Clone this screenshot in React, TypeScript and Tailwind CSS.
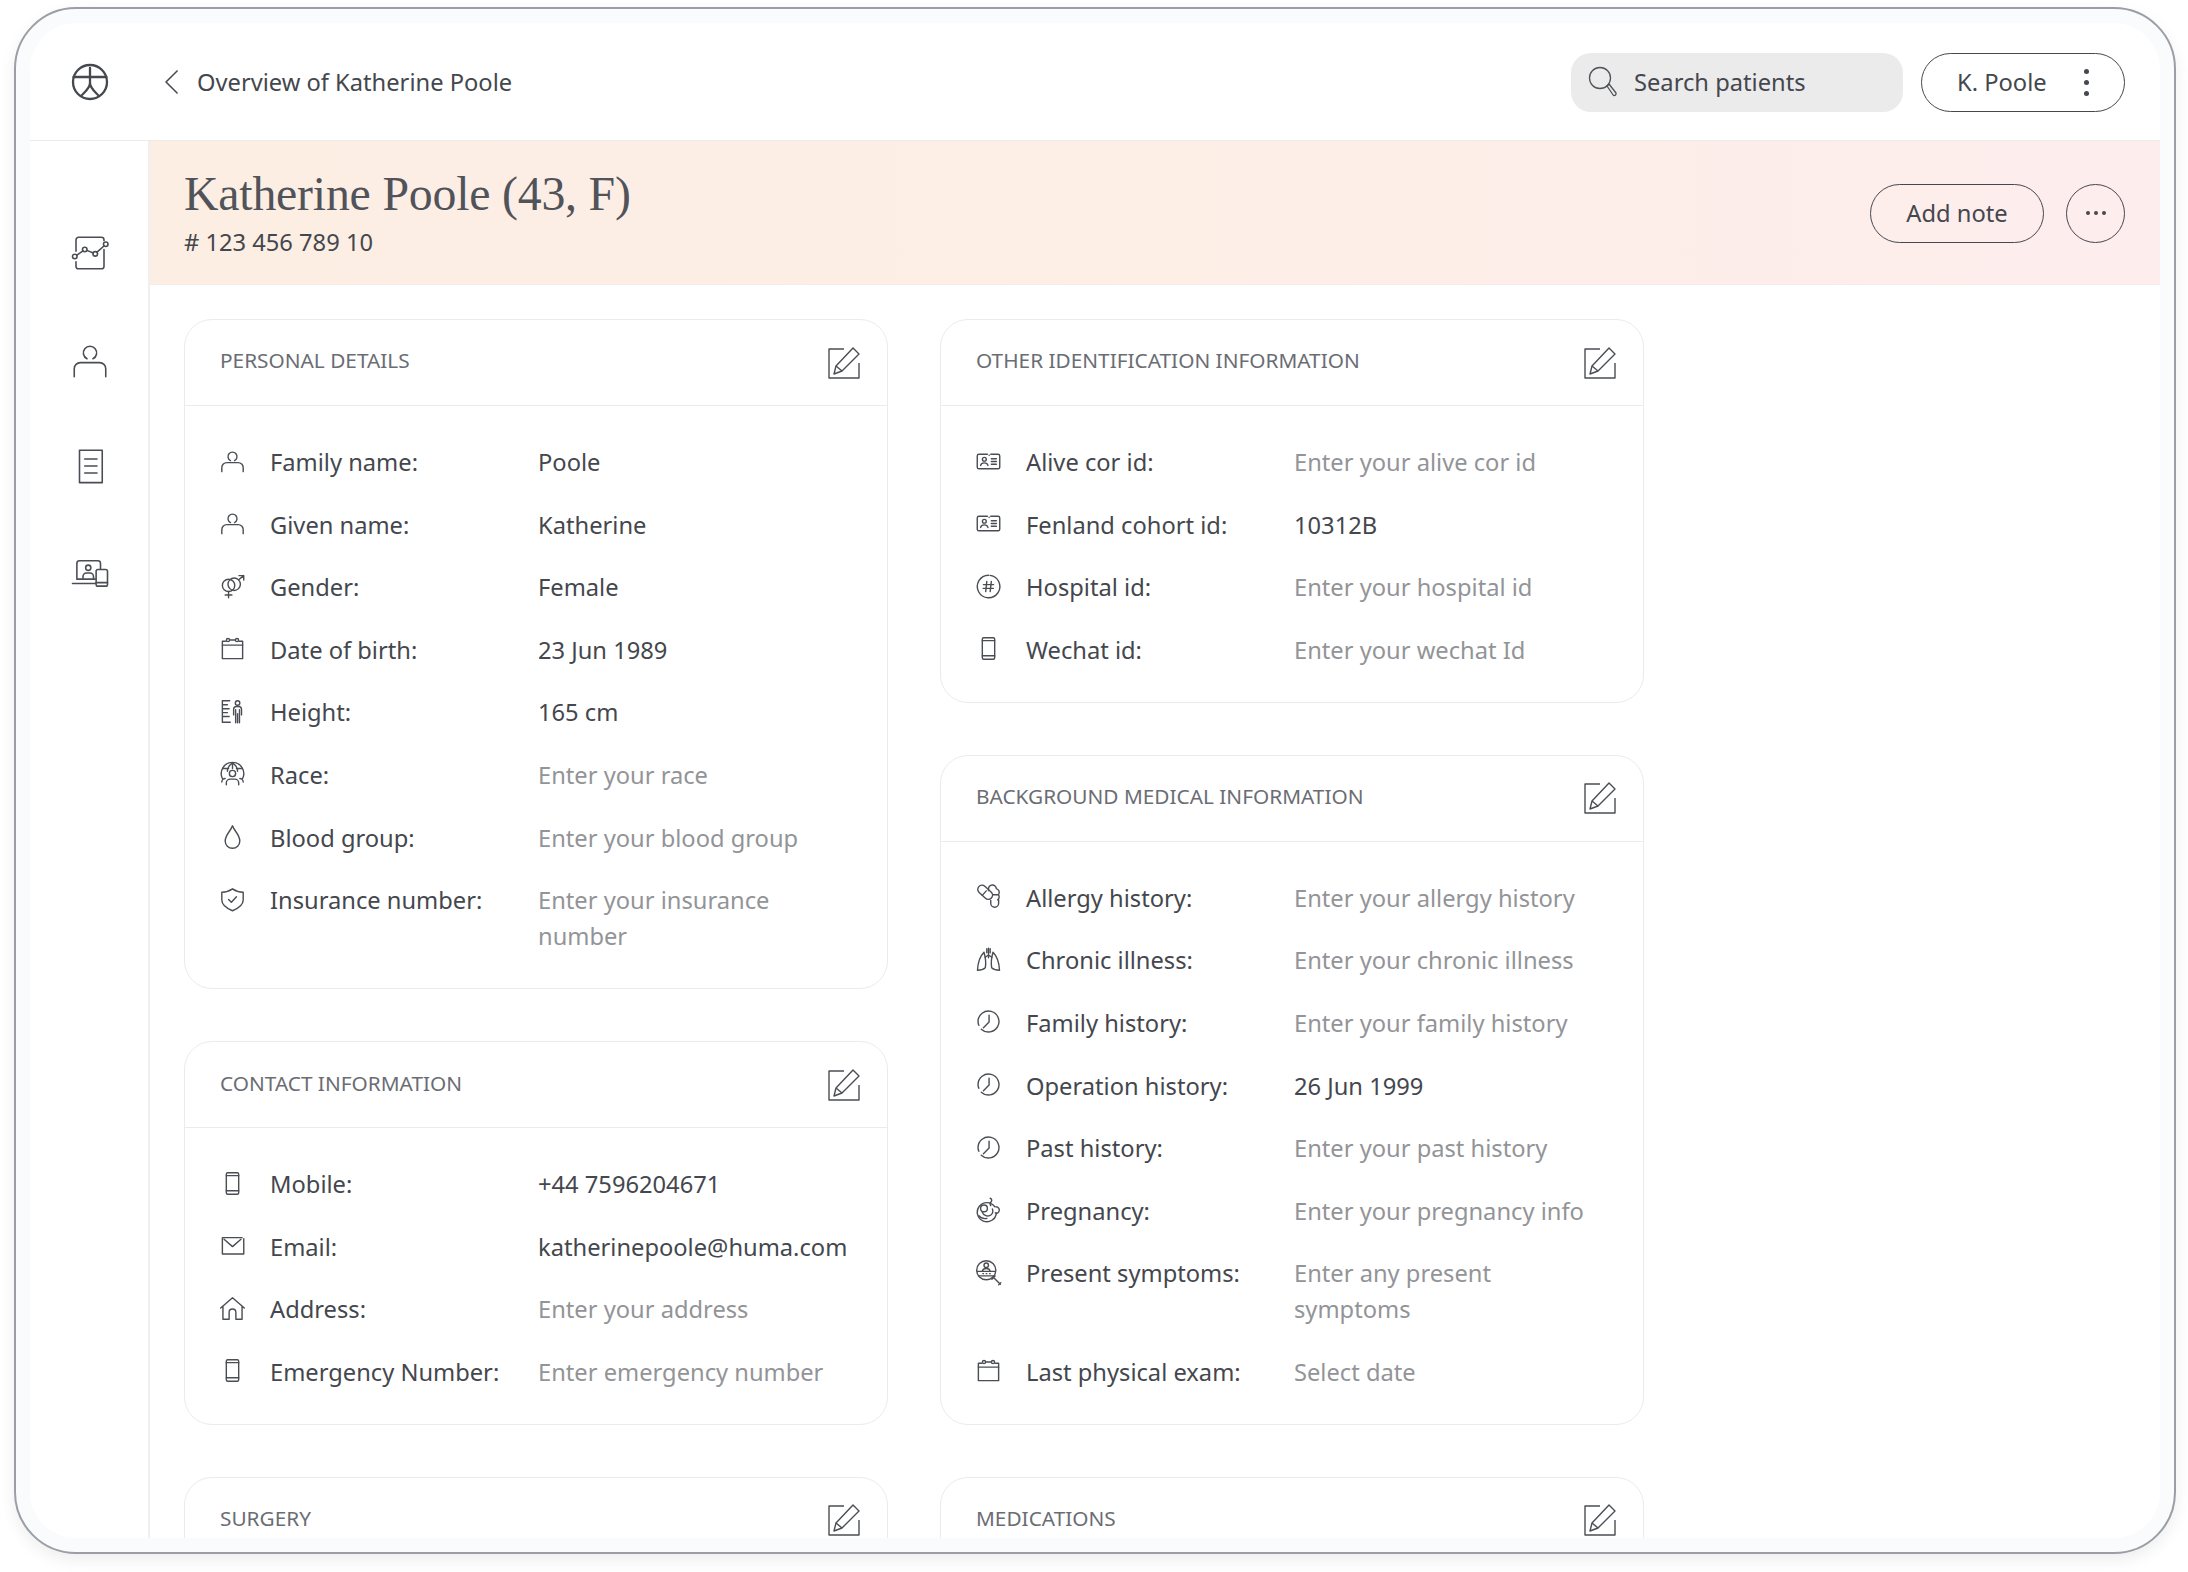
import React from "react";

const I = ({ children, s = 27, w = 1.25, c = "shrink-0 text-[#4a4d53]", vb = "0 0 24 24" }: { children: React.ReactNode; s?: number; w?: number; c?: string; vb?: string }) => (
  <svg width={s} height={s} viewBox={vb} fill="none" stroke="currentColor" strokeWidth={w} strokeLinecap="round" strokeLinejoin="round" className={c}>
    {children}
  </svg>
);

const PersonP = () => (<><path d="M10.200 11.200a4 4 0 1 1 3.600 0" /><path d="M2.500 21v-3.500a4.500 4.500 0 0 1 4.500-4.500h10a4.500 4.500 0 0 1 4.500 4.500V21" /></>);
const CalP = () => (<><path d="M6 5.500H3v15.500h18V5.500h-3" /><path d="M10 4.500h4" /><path d="M3 9h18" /><circle cx="8" cy="4.500" r="1.400" /><circle cx="16" cy="4.500" r="1.400" /></>);
const PhoneP = () => (<><rect x="6.500" y="2.500" width="11" height="19" rx="1.300" /><path d="M6.500 5h11M6.500 18.500h11" /></>);
const ClockP = () => (<><path d="M5.600 18.800A9.300 9.300 0 1 0 2.700 12c0 1.200.3 2.400.7 3.400" /><path d="M12.500 6.500v6l-5 5" /></>);
const CardP = () => (<><path d="M11 5.500H3.500a1.500 1.500 0 0 0-1.500 1.500v10a1.500 1.500 0 0 0 1.500 1.500h17A1.500 1.500 0 0 0 22 17V7a1.500 1.500 0 0 0-1.500-1.500H14" /><circle cx="8.300" cy="10" r="1.700" /><path d="M5 15.500a3.300 2.800 0 0 1 6.500 0" /><path d="M14.500 9.500H19M14.500 12H19M14.500 14.500H19" /><path d="M12.500 6.500h.1" /></>);

const rowIcons: Record<string, React.ReactNode> = {
  person: <PersonP />,
  gender: (<><circle cx="8.500" cy="11" r="5.500" /><circle cx="13.500" cy="10" r="5.500" /><path d="M8.500 16.500V22M5.500 19.500h6" /><path d="M17.500 6 22 2.300M17.700 2.300H22v4" /></>),
  cal: <CalP />,
  height: (<><path d="M9.500 2.500H3v19h7M3 6h4.500M3 9.500h6M3 13h4.500M3 16.500h6" /><circle cx="16.500" cy="4.500" r="2" /><path d="M13 15v-5a2.500 2.500 0 0 1 2.500-2.500h2A2.500 2.500 0 0 1 20 10v5M14.800 10.500V22M18.200 10.500V22M16.500 14v8" /></>),
  race: (<><path d="M3 16.500a10 10 0 1 1 18 0" /><path d="M12 2.500c-3 2-4.500 4.500-4.500 7.500M12 2.500c3 2 4.500 4.500 4.500 7.500M12 2.500v5M3.500 7.500h5M15.500 7.500h5" /><circle cx="12" cy="12" r="2.800" /><path d="M6.500 22v-1.500a3.500 3.500 0 0 1 3.500-3.500h4a3.500 3.500 0 0 1 3.500 3.500V22" /><path d="M2.500 19.500c0-1.500 1.200-3 3-3M21.500 19.500c0-1.500-1.200-3-3-3" /></>),
  drop: <path d="M12 2.500c-1.500 4.500-6.500 8-6.500 13.500a6.300 6.300 0 0 0 13 0c0-5.500-5-9-6.500-13.500z" />,
  shield: (<><path d="M12 2.500c2.500 1.800 5.500 2.800 9.500 3v7c0 4.500-4.500 7.500-9.500 9.500-5-2-9.500-5-9.500-9.500v-7c4-.2 7-1.200 9.500-3z" /><path d="m8.500 12 2.500 2.500 4.500-5" /></>),
  card: <CardP />,
  hash: (<><path d="M13.500 2.100A10 10 0 1 1 12 2" /><path d="M10.500 7.500 9.500 16.500M14.500 7.500l-1 9M7.500 10.300h9M7.300 13.700h9" /></>),
  phone: <PhoneP />,
  allergy: (<><rect x="1.500" y="4.500" width="15" height="7.500" rx="3.750" transform="rotate(42 9 8.250)" /><path d="m6.500 11 3.500-4" /><path d="M12 6.800V5.500a3.500 3.500 0 0 1 7-.5c2.500.800 3.300 3.500 1.800 5.500h-5M20.800 10.500c1.200 1.500.7 3.500-.7 4.500M14 15.500v2.500a3.500 3.500 0 0 0 7 0v-3" /></>),
  lungs: (<><path d="M12 2v8.500M12 8l-3 2M12 8l3 2M10.500 2.500V6M13.500 2.500V6" /><path d="M8 5.500C4.500 9 2.500 15 2.200 21.500c3 0 5.500-.8 7-2.200.5-3 .2-9-1.200-13.800z" /><path d="M16 5.500c3.500 3.500 5.500 9.500 5.800 16-3 0-5.500-.8-7-2.200-.5-3-.2-9 1.200-13.800z" /></>),
  clock: <ClockP />,
  fetus: (<><path d="M17.500 9.500A8.500 8.500 0 1 0 19 15" /><path d="M18.500 9.500c2.500 0 3.800 2.500 2.700 4.500-.7 1.300-2.200 1.500-3.200 1" /><path d="M13.500 2c1.700.8 1.700 2.300.7 3.300-1 1-1 2-.2 3.200" /><circle cx="8" cy="11" r="3" /><path d="M6.500 14.500c1 2.500 4 4 6.500 3 2.500-1 3.500-3.500 2.500-6" /><path d="M3.500 17.500c1.500 2 4 3 7 2.500" /></>),
  symptoms: (<><circle cx="10" cy="10" r="8.500" /><circle cx="10" cy="5.500" r="2" /><path d="M2 11h16M3 15h14" /><path d="M6.500 11c.3-1.700 1.800-2.500 3.500-2.500s3.200.8 3.500 2.500" /><path d="M7 13h.5M10 13h.5M13 13h.5" /><path d="m16 16 6.500 6.500M18 15l-3 3M23 21l-2 2" /></>),
  mail: (<><path d="M20.500 5H3v14.500h19V6" /><path d="m4.500 6.500 7.500 6.500 7.500-6.500" /></>),
  home: (<><path d="M1.500 11.500 12 2.500l10.500 9M3.500 10v11.500H9v-6a3 3 0 0 1 6 0v6h5.500V10" /></>),
};

const Ed = () => (
  <svg width="32" height="32" viewBox="0 0 32 32" fill="none" stroke="#4a4d53" strokeWidth="1.400" strokeLinejoin="round" className="shrink-0">
    <path d="M16 2H1v29h30V16" />
    <path d="M25 1 31 7 14 24l-8 3 2-8z" />
    <path d="m8 19 6 5" />
  </svg>
);

type R = [string, string, string, boolean?];

const Card = ({ title, rows }: { title: string; rows?: R[] }) => (
  <div className="w-[704px] shrink-0 rounded-[28px] border border-[#ebebec] bg-white">
    <div className="flex h-[86px] items-center justify-between border-b border-[#ebebec] pl-[35px] pr-[27px]">
      <span className="mb-[3px] text-[20.800px] uppercase text-[#6a6d73]">{title}</span>
      <Ed />
    </div>
    {rows && (
      <div className="flex flex-col gap-[26.600px] pb-[34px] pl-[35px] pr-[34px] pt-[38px]">
        {rows.map(([ic, label, val, filled]) => (
          <div key={label} className="flex text-[23.700px] leading-[36px]">
            <span className="-ml-[1.500px] flex h-[34px] w-[51.500px] shrink-0 items-center">{<I>{rowIcons[ic]}</I>}</span>
            <span className="w-[268px] shrink-0 text-[#44474d]">{label}</span>
            <span className={filled ? "text-[#44474d]" : "text-[#929497]"}>{val}</span>
          </div>
        ))}
      </div>
    )}
  </div>
);

const personal: R[] = [
  ["person", "Family name:", "Poole", true],
  ["person", "Given name:", "Katherine", true],
  ["gender", "Gender:", "Female", true],
  ["cal", "Date of birth:", "23 Jun 1989", true],
  ["height", "Height:", "165 cm", true],
  ["race", "Race:", "Enter your race"],
  ["drop", "Blood group:", "Enter your blood group"],
  ["shield", "Insurance number:", "Enter your insurance number"],
];
const contact: R[] = [
  ["phone", "Mobile:", "+44 7596204671", true],
  ["mail", "Email:", "katherinepoole@huma.com", true],
  ["home", "Address:", "Enter your address"],
  ["phone", "Emergency Number:", "Enter emergency number"],
];
const other: R[] = [
  ["card", "Alive cor id:", "Enter your alive cor id"],
  ["card", "Fenland cohort id:", "10312B", true],
  ["hash", "Hospital id:", "Enter your hospital id"],
  ["phone", "Wechat id:", "Enter your wechat Id"],
];
const medical: R[] = [
  ["allergy", "Allergy history:", "Enter your allergy history"],
  ["lungs", "Chronic illness:", "Enter your chronic illness"],
  ["clock", "Family history:", "Enter your family history"],
  ["clock", "Operation history:", "26 Jun 1999", true],
  ["clock", "Past history:", "Enter your past history"],
  ["fetus", "Pregnancy:", "Enter your pregnancy info"],
  ["symptoms", "Present symptoms:", "Enter any present symptoms"],
  ["cal", "Last physical exam:", "Select date"],
];

export default function App() {
  return (
    <div className="h-[1572px] w-[2188px] overflow-hidden bg-white pb-[18px] pl-[14px] pr-[12px] pt-[7px] font-['Noto_Sans',sans-serif]">
      <div className="h-full w-full rounded-[62px] border-2 border-[#9b9ea6] bg-[#fafbfc] p-[14px] shadow-[0_6px_16px_rgba(0,0,0,0.07)]">
        <div className="flex h-full flex-col overflow-hidden rounded-[46px] bg-white">
          <header className="flex h-[118px] shrink-0 items-center border-b border-[#ebebec] pr-[35px] pt-[1px] text-[23.700px] text-[#44474d]">
            <span className="flex w-[120px] shrink-0 justify-center">
              <svg width="38" height="38" viewBox="0 0 38 38" fill="none" stroke="#45484e" strokeWidth="2.300" strokeLinecap="round">
                <circle cx="19" cy="19" r="17" />
                <path d="M2.500 14h33M19 5v15c0 5-5 9-8.500 12.500M19 20c0 5 5 9 8.500 12.500" />
              </svg>
            </span>
            <I s={28} w={1.300} c="ml-[9px] mr-[10px] shrink-0 text-[#45484e]"><path d="M15.500 2.500 6 12l9.500 9.500" /></I>
            <span className="mt-[1px]">Overview of Katherine Poole</span>
            <div className="ml-auto flex h-[59px] w-[332px] items-center gap-[16px] rounded-[20px] bg-[#ebebec] pl-[17px]">
              <svg width="30" height="32" viewBox="0 0 30 32" fill="none" stroke="#4f5258" strokeWidth="1.300" strokeLinejoin="round" className="shrink-0"><circle cx="12" cy="12" r="10.500" /><path d="m19 20 2-2 7 9a2 2 0 0 1-2.500 2.500z" /></svg>
              <span className="mt-[1px]">Search patients</span>
            </div>
            <div className="ml-[18px] flex h-[59px] w-[204px] items-center justify-between rounded-[30px] border-[1.500px] border-[#45484e] pl-[35px] pr-[35px]">
              <span className="mt-[1px]">K. Poole</span>
              <span className="flex flex-col gap-[6px]">
                <span className="h-[5px] w-[5px] rounded-full bg-[#45484e]" />
                <span className="h-[5px] w-[5px] rounded-full bg-[#45484e]" />
                <span className="h-[5px] w-[5px] rounded-full bg-[#45484e]" />
              </span>
            </div>
          </header>
          <div className="flex min-h-0 flex-1">
            <nav className="flex w-[120px] shrink-0 flex-col items-center gap-[64.500px] border-r-2 border-[#efeff0] pl-[2px] pt-[91px]">
              <I s={42} w={0.900}><path d="M4 11V4.500A1.500 1.500 0 0 1 5.500 3h13A1.500 1.500 0 0 1 20 4.500V5M20 10v9.500a1.500 1.500 0 0 1-1.500 1.500h-13A1.500 1.500 0 0 1 4 19.500V17" /><circle cx="3.300" cy="14" r="1.300" /><circle cx="9" cy="10" r="1.300" /><circle cx="15" cy="12.500" r="1.300" /><circle cx="21" cy="7" r="1.300" /><path d="m4.500 13.200 3.500-2.400M10.200 10.500l3.700 1.500M16 11.500l4-3.500" /></I>
              <I s={42} w={0.900}><path d="M10.300 11.300a3.800 3.800 0 1 1 3.400 0" /><path d="M3 21.500V17a3.500 3.500 0 0 1 3.500-3.500h11A3.500 3.500 0 0 1 21 17v4.500" /></I>
              <I s={42} w={0.900}><path d="M6 3h13v18.500H6z" /><path d="M9 8h7M9 12h7M9 16h7" /></I>
              <I s={42} w={0.900}><path d="M15 15.500H4.500v-9A1.500 1.500 0 0 1 6 5h10.500A1.500 1.500 0 0 1 18 6.500v3" /><path d="M2 18h13" /><circle cx="11" cy="9" r="1.500" /><path d="M8 15v-1a2 2 0 0 1 2-2h2a2 2 0 0 1 2 2v1" /><rect x="15.500" y="10" width="6.500" height="9.500" rx="1" /><path d="M15.500 17.500h6.500" /></I>
            </nav>
            <main className="flex min-w-0 flex-1 flex-col overflow-hidden">
              <section className="flex h-[144px] shrink-0 items-center justify-between border-b border-[#f2eeec] bg-gradient-to-r from-[#fdeee4] via-[#fdeee6] to-[#fdeded] pl-[34px] pr-[35px]">
                <div className="flex flex-col">
                  <span className="-mt-[1px] font-['Liberation_Serif',serif] text-[47.800px] leading-[54px] tracking-[-0.2px] text-[#505359]">Katherine Poole (43, F)</span>
                  <span className="mt-[5px] text-[23.700px] leading-[32px] text-[#44474d]"># 123 456 789 10</span>
                </div>
                <div className="flex items-center gap-[22px] pt-[1px]">
                  <span className="flex h-[59px] w-[174px] items-center justify-center rounded-[30px] border-[1.500px] border-[#45484e] pt-[2px] text-[23.700px] text-[#44474d]">Add note</span>
                  <span className="flex h-[59px] w-[59px] items-center justify-center gap-[4px] rounded-full border-[1.500px] border-[#45484e]">
                    <span className="h-[4px] w-[4px] rounded-full bg-[#45484e]" />
                    <span className="h-[4px] w-[4px] rounded-full bg-[#45484e]" />
                    <span className="h-[4px] w-[4px] rounded-full bg-[#45484e]" />
                  </span>
                </div>
              </section>
              <div className="flex gap-[52px] pl-[34px] pt-[34px]">
                <div className="flex flex-col gap-[52px]">
                  <Card title="Personal details" rows={personal} />
                  <Card title="Contact information" rows={contact} />
                  <Card title="Surgery" />
                </div>
                <div className="flex flex-col gap-[52px]">
                  <Card title="Other identification information" rows={other} />
                  <Card title="Background medical information" rows={medical} />
                  <Card title="Medications" />
                </div>
              </div>
            </main>
          </div>
        </div>
      </div>
    </div>
  );
}
